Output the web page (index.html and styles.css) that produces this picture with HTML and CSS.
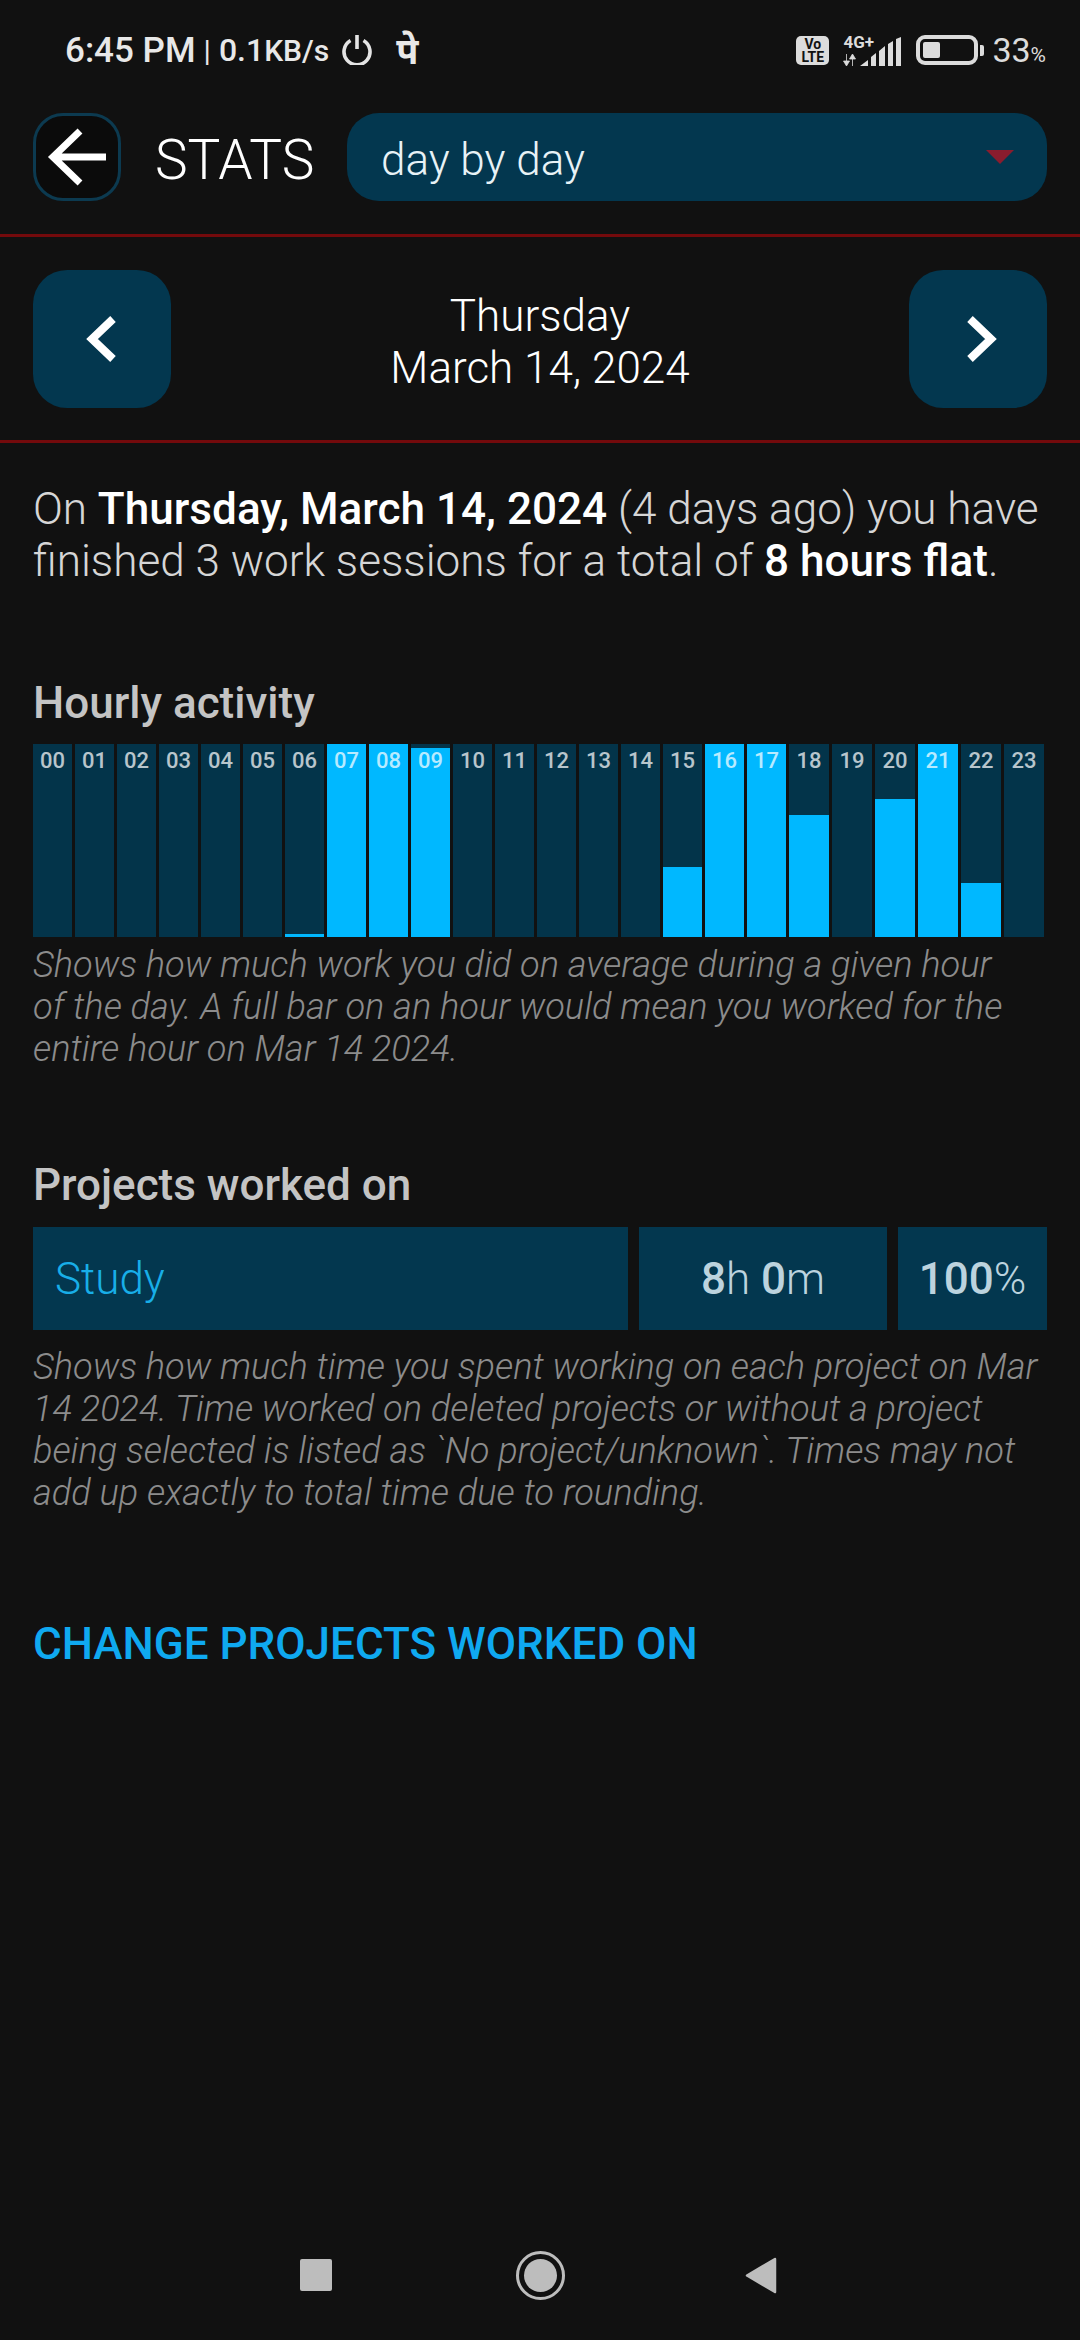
FILE: index.html
```html
<!DOCTYPE html>
<html lang="en">
<head>
  <meta charset="UTF-8" />
  <meta name="viewport" content="width=device-width, initial-scale=1.0" />
  <title>Stats</title>
  <link rel="stylesheet" href="styles.css">
</head>
<body>
  <div class="status-bar">
    <div class="status-left">
      <span>6:45 PM</span>
      <span class="status-sep">|</span>
      <span class="status-speed">0.1<span class="status-unit">KB/s</span></span>
      <svg class="power-icon" width="30" height="30" viewBox="0 0 30 30">
        <path d="M8.500 5.500a13 13 0 1 0 13 0" fill="none" stroke="#e4e4e4" stroke-width="3.600"/>
        <path d="M15 0v14" fill="none" stroke="#e4e4e4" stroke-width="3.600"/>
      </svg>
      <span class="status-phonepe">पे</span>
    </div>
    <div class="status-right">
      <div class="volte">Vo<br>LTE</div>
      <div class="network">
        <div class="network-type">
          <span>4G+</span>
          <svg width="13" height="12" viewBox="0 0 13 12">
            <path d="M3.500 0v7M0.500 7h6L3.500 12zM9.500 12V5M6.500 5h6L9.500 0z" fill="#dcdcdc" stroke="#dcdcdc" stroke-width="0.8"/>
          </svg>
        </div>
        <svg width="41" height="29" viewBox="0 0 41 29">
          <path d="M0 29L8 23V29zM11 20l5-4V29H11zM19 14l6-5V29H19zM28 7l5-3V29H28zM36 2l5-2V29H36z" fill="#dcdcdc"/>
        </svg>
      </div>
      <div class="battery"><div class="battery-level"></div></div>
      <div class="battery-nub"></div>
      <div class="battery-text">33<span class="battery-pct">%</span></div>
    </div>
  </div>

  <header class="top-bar">
    <button class="back-btn">
      <svg width="62" height="62" viewBox="0 0 62 62">
        <path d="M60 31H8M34 5L7 31l27 26" fill="none" stroke="#fff" stroke-width="7"/>
      </svg>
    </button>
    <h1 class="page-title">STATS</h1>
    <div class="range-select">
      <span class="select-text">day by day</span>
      <span class="select-arrow"></span>
    </div>
  </header>

  <section class="date-nav">
    <button class="date-btn">
      <svg class="chevron-prev" width="40" height="50" viewBox="0 0 40 50">
        <path d="M32 5L11 25l21 20" fill="none" stroke="#fff" stroke-width="8"/>
      </svg>
    </button>
    <div class="date-label">Thursday<br>March 14, 2024</div>
    <button class="date-btn">
      <svg class="chevron-next" width="40" height="50" viewBox="0 0 40 50">
        <path d="M8 5l21 20L8 45" fill="none" stroke="#fff" stroke-width="8"/>
      </svg>
    </button>
  </section>

  <main class="content">
    <p class="summary">On <b>Thursday, March 14, 2024</b> (4 days ago) you have finished 3 work sessions for a total of <b>8 hours flat</b>.</p>

    <h2 class="section-title title-hourly">Hourly activity</h2>
    <div class="hours">
      <div class="hour"><span>00</span></div>
      <div class="hour"><span>01</span></div>
      <div class="hour"><span>02</span></div>
      <div class="hour"><span>03</span></div>
      <div class="hour"><span>04</span></div>
      <div class="hour"><span>05</span></div>
      <div class="hour"><div class="hour-fill" style="height: 1.6%"></div><span>06</span></div>
      <div class="hour"><div class="hour-fill" style="height: 100%"></div><span>07</span></div>
      <div class="hour"><div class="hour-fill" style="height: 100%"></div><span>08</span></div>
      <div class="hour"><div class="hour-fill" style="height: 98%"></div><span>09</span></div>
      <div class="hour"><span>10</span></div>
      <div class="hour"><span>11</span></div>
      <div class="hour"><span>12</span></div>
      <div class="hour"><span>13</span></div>
      <div class="hour"><span>14</span></div>
      <div class="hour"><div class="hour-fill" style="height: 36.3%"></div><span>15</span></div>
      <div class="hour"><div class="hour-fill" style="height: 100%"></div><span>16</span></div>
      <div class="hour"><div class="hour-fill" style="height: 100%"></div><span>17</span></div>
      <div class="hour"><div class="hour-fill" style="height: 63.2%"></div><span>18</span></div>
      <div class="hour"><span>19</span></div>
      <div class="hour"><div class="hour-fill" style="height: 71.5%"></div><span>20</span></div>
      <div class="hour"><div class="hour-fill" style="height: 100%"></div><span>21</span></div>
      <div class="hour"><div class="hour-fill" style="height: 28%"></div><span>22</span></div>
      <div class="hour"><span>23</span></div>
    </div>
    <p class="hint">Shows how much work you did on average during a given hour of&nbsp;the day. A full bar on an hour would mean you worked for the entire hour on Mar 14 2024.</p>

    <h2 class="section-title title-projects">Projects worked on</h2>
    <div class="project-row">
      <div class="project-name">Study</div>
      <div class="project-time"><b>8</b>h <b>0</b>m</div>
      <div class="project-pct"><b>100</b>%</div>
    </div>
    <p class="hint">Shows how much time you spent working on each project on Mar 14 2024. Time worked on deleted projects or without a project being selected is listed as `No project/unknown`. Times may not add up exactly to total time due to rounding.</p>

    <a class="change-link" href="#">CHANGE PROJECTS WORKED ON</a>
  </main>

  <nav class="nav-bar">
    <div class="nav-square"></div>
    <div class="nav-circle"><div class="nav-dot"></div></div>
    <svg width="32" height="37" viewBox="0 0 32 37">
      <path d="M30 2L2 18.500 30 35z" fill="#bdbdbd" stroke="#bdbdbd" stroke-width="2.500" stroke-linejoin="round"/>
    </svg>
  </nav>
</body>
</html>
```

FILE: styles.css
```css
* {
  box-sizing: border-box;
}

body {
  font-family: Roboto, "Noto Sans", sans-serif;
  margin: 0;
  width: 1080px;
  height: 2340px;
  background-color: #111111;
  color: #fff;
  display: flex;
  flex-direction: column;
  overflow: hidden;
}

button {
  border: none;
  padding: 0;
  display: flex;
  align-items: center;
  justify-content: center;
}

/* status bar */
.status-bar {
  height: 100px;
  padding: 0 34px 0 65px;
  display: flex;
  align-items: center;
  justify-content: space-between;
}

.status-left {
  display: flex;
  align-items: center;
  font-size: 35px;
  font-weight: 500;
  color: #e8e8e8;
}

.status-sep {
  font-weight: 400;
  margin: 0 8px;
  font-size: 30px;
}

.status-speed {
  font-size: 32px;
}

.status-unit {
  font-size: 30px;
}

.power-icon {
  margin-left: 13px;
}

.status-phonepe {
  margin-left: 24px;
  font-weight: 700;
  font-size: 36px;
}

.status-right {
  display: flex;
  align-items: center;
  color: #dcdcdc;
}

.volte {
  width: 33px;
  height: 29px;
  border-radius: 5px;
  background-color: #dcdcdc;
  color: #111;
  font-size: 14px;
  font-weight: 700;
  line-height: 13px;
  text-align: center;
  padding-top: 2px;
}

.network {
  display: flex;
  align-items: flex-end;
  margin-left: 14px;
  height: 31px;
}

.network-type {
  display: flex;
  flex-direction: column;
  align-items: flex-start;
  gap: 6px;
  width: 17px;
  font-size: 17px;
  font-weight: 700;
  line-height: 12px;
  white-space: nowrap;
}

.battery {
  width: 62px;
  height: 30px;
  margin-left: 15px;
  border: 4px solid #dcdcdc;
  border-radius: 9px;
  padding: 3px;
}

.battery-level {
  width: 17px;
  height: 100%;
  border-radius: 2px;
  background-color: #dcdcdc;
}

.battery-nub {
  width: 4px;
  height: 11px;
  margin-left: 2px;
  border-radius: 0 2px 2px 0;
  background-color: #dcdcdc;
}

.battery-text {
  margin-left: 8px;
  font-size: 34px;
  font-weight: 400;
}

.battery-pct {
  font-size: 21px;
}

/* top bar */
.top-bar {
  margin-top: 13px;
  padding: 0 33px 33px;
  display: flex;
  align-items: center;
  border-bottom: 3px solid #740a0c;
  height: 124px;
}

.back-btn {
  width: 88px;
  height: 88px;
  border: 3px solid #0c3a50;
  border-radius: 30px;
  background-color: #0b0b0b;
}

.page-title {
  margin: 6px 0 0 34px;
  width: 192px;
  font-size: 55px;
  font-weight: 300;
}

.range-select {
  flex: 1;
  height: 88px;
  padding: 0 33px 0 34px;
  display: flex;
  align-items: center;
  justify-content: space-between;
  border-radius: 32px;
  background-color: #03374f;
  font-size: 44px;
  font-weight: 300;
  color: #e8f2f6;
}

.select-text {
  margin-top: 6px;
}

.select-arrow {
  border-top: 14px solid #8a1c2e;
  border-left: 14px solid transparent;
  border-right: 14px solid transparent;
}

/* date navigation */
.date-nav {
  height: 206px;
  padding: 0 33px;
  display: flex;
  align-items: center;
  justify-content: space-between;
  border-bottom: 3px solid #740a0c;
}

.date-btn {
  width: 138px;
  height: 138px;
  border-radius: 34px;
  background-color: #03374f;
}

.chevron-prev {
  margin-right: 3px;
}

.chevron-next {
  margin-left: 8px;
}

.date-label {
  padding-top: 6px;
  font-size: 44px;
  font-weight: 300;
  line-height: 52px;
  text-align: center;
}

/* content */
.content {
  padding: 0 33px;
}

.summary {
  margin: 40px 0 0;
  font-size: 44.1px;
  font-weight: 300;
  line-height: 52px;
  color: #d6d6d6;
}

.summary b {
  font-weight: 500;
  color: #fff;
}

.section-title {
  margin: 0;
  font-size: 44px;
  font-weight: 500;
  line-height: 48px;
  color: #c4c4c4;
}

.title-hourly {
  margin-top: 92px;
  margin-bottom: 17px;
}

.title-projects {
  margin-top: 91px;
  margin-bottom: 18px;
}

.hours {
  height: 193px;
  display: grid;
  grid-template-columns: repeat(18, 39px) repeat(6, 40px);
  gap: 3px;
}

.hour {
  position: relative;
  display: flex;
  justify-content: center;
  padding-top: 3px;
  background-color: #03344a;
  color: rgba(255, 255, 255, 0.72);
  font-size: 22px;
  font-weight: 500;
  line-height: 28px;
}

.hour span {
  position: relative;
}

.hour-fill {
  position: absolute;
  left: 0;
  right: 0;
  bottom: 0;
  background-color: #00b8ff;
}

.hint {
  margin: 7px 0 0;
  font-size: 36.2px;
  font-weight: 300;
  font-style: italic;
  line-height: 42px;
  color: #8c8c8c;
}

.project-row {
  display: flex;
  gap: 11px;
  height: 103px;
  margin-bottom: 16px;
}

.project-row + .hint {
  margin-top: 0;
}

.project-name,
.project-time,
.project-pct {
  display: flex;
  align-items: center;
  background-color: #03374f;
  font-size: 44px;
  font-weight: 300;
  color: #bcd3de;
}

.project-name {
  flex: 1;
  padding-left: 22px;
  color: #18aee8;
}

.project-time,
.project-pct {
  justify-content: center;
  white-space: pre;
}

.project-row b {
  font-weight: 500;
}

.project-time {
  width: 248px;
}

.project-pct {
  width: 149px;
}

.change-link {
  display: block;
  margin-top: 105px;
  font-size: 44px;
  font-weight: 500;
  line-height: 50px;
  color: #0fa9f0;
  text-decoration: none;
}

/* bottom navigation */
.nav-bar {
  margin-top: auto;
  height: 130px;
  padding-right: 4px;
  display: flex;
  align-items: center;
  justify-content: center;
  gap: 180px;
}

.nav-square {
  width: 32px;
  height: 32px;
  margin-right: 4px;
  border-radius: 2px;
  background-color: #bdbdbd;
}

.nav-circle {
  width: 49px;
  height: 49px;
  padding: 5px;
  border: 3px solid #bdbdbd;
  border-radius: 50%;
}

.nav-dot {
  width: 100%;
  height: 100%;
  border-radius: 50%;
  background-color: #bdbdbd;
}
```
